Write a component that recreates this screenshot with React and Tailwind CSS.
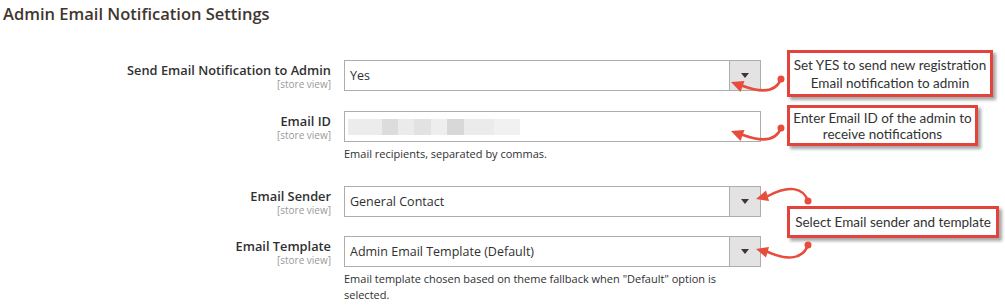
const rows = [
  { label: "Send Email Notification to Admin", value: "Yes", type: "select" },
  { label: "Email ID", type: "blur", note: "Email recipients, separated by commas." },
  { label: "Email Sender", value: "General Contact", type: "select" },
  {
    label: "Email Template",
    value: "Admin Email Template (Default)",
    type: "select",
    note: 'Email template chosen based on theme fallback when "Default" option is selected.',
  },
];

const blurBlocks = [
  ["w-[34px]", "bg-[#ececec]"],
  ["w-[16px]", "bg-[#dcdcdc]"],
  ["w-[16px]", "bg-[#ebebeb]"],
  ["w-[17px]", "bg-[#e2e2e2]"],
  ["w-[16px]", "bg-[#eeeeee]"],
  ["w-[17px]", "bg-[#d8d8d8]"],
  ["w-[30px]", "bg-[#ebebeb]"],
  ["w-[26px]", "bg-[#f1f1f1]"],
];

function Field({ row }) {
  return (
    <div className="relative h-[31px] w-[417px] border border-[#adadad] bg-white">
      {row.type === "select" ? (
        <>
          <div className="pl-[5px] text-[12.5px] leading-[29px] text-[#303030]">{row.value}</div>
          <div className="absolute right-0 top-0 flex h-full w-[31px] items-center justify-center border-l border-[#adadad] bg-[#e3e3e3]">
            <div className="h-0 w-0 border-l-[4px] border-r-[4px] border-t-[5px] border-l-transparent border-r-transparent border-t-[#41362f]" />
          </div>
        </>
      ) : (
        <div className="flex h-full items-center pl-[3px]">
          <div className="flex h-[16px]">
            {blurBlocks.map(([w, bg], i) => (
              <div key={i} className={`${w} ${bg} h-full`} />
            ))}
          </div>
        </div>
      )}
    </div>
  );
}

function Row({ row, className }) {
  return (
    <div className={`flex ${className}`}>
      <div className="w-[331px] pt-[2px] text-right">
        <div className="text-[12.8px] font-semibold leading-[16px] text-[#303030]">{row.label}</div>
        <div className="text-[10px] leading-[12px] text-[#999]">[store view]</div>
      </div>
      <div className="ml-[13px] w-[417px]">
        <Field row={row} />
        {row.note ? (
          <p className="mt-[4px] text-[11px] leading-[16px] text-[#303030]">{row.note}</p>
        ) : null}
      </div>
    </div>
  );
}

function Callout({ className, children }) {
  return (
    <div
      className={`absolute flex flex-col items-center justify-center border-[3px] border-[#e2443d] bg-white text-center text-[13.5px] text-[#333] shadow-[3px_3px_3px_rgba(0,0,0,0.35)] ${className}`}
      style={{ fontFamily: "Lato, 'Liberation Sans', sans-serif" }}
    >
      {children}
    </div>
  );
}

export default function App() {
  return (
    <div
      className="relative h-[308px] w-[1005px] overflow-hidden bg-white"
      style={{ fontFamily: "'Open Sans', 'Liberation Sans', sans-serif" }}
    >
      <h2 className="pl-[3px] pt-[3px] text-[16.5px] font-semibold leading-[22px] text-[#41362f]">
        Admin Email Notification Settings
      </h2>

      <div className="mt-[35px]">
        <Row row={rows[0]} />
        <Row row={rows[1]} className="mt-[20px]" />
        <Row row={rows[2]} className="mt-[24px]" />
        <Row row={rows[3]} className="mt-[19px]" />
      </div>

      <Callout className="left-[787px] top-[50px] h-[47px] w-[206px] leading-[18px]">
        <span>Set YES to send new registration</span>
        <span>Email notification to admin</span>
      </Callout>
      <Callout className="left-[787px] top-[105px] h-[41px] w-[191px] leading-[16px]">
        <span>Enter Email ID of the admin to</span>
        <span>receive notifications</span>
      </Callout>
      <Callout className="left-[787px] top-[206px] h-[32px] w-[212px] leading-[17px]">
        <span>Select Email sender and template</span>
      </Callout>

      <svg className="pointer-events-none absolute inset-0" width="1005" height="308">
        <g fill="none" stroke="#e74c3c" strokeWidth="2.5" strokeLinecap="round">
          <path d="M781 79 C776 92 762 93 743 86" />
          <path d="M781 128 C776 141 762 142 743 135" />
          <path d="M808 201 C803 187 788 185 768 196" />
          <path d="M808 245 C803 259 788 261 768 252" />
        </g>
        <g fill="#e74c3c">
          <circle cx="781" cy="79" r="3.5" />
          <circle cx="781" cy="128" r="3.5" />
          <circle cx="808" cy="201" r="3.5" />
          <circle cx="808" cy="245" r="3.5" />
          <polygon points="731,82 744.5,81 740.5,92" />
          <polygon points="731,131 744.5,130 740.5,141" />
          <polygon points="756,199 769,201 766,190.5" />
          <polygon points="756,249 769,247 766,257.5" />
        </g>
      </svg>
    </div>
  );
}
